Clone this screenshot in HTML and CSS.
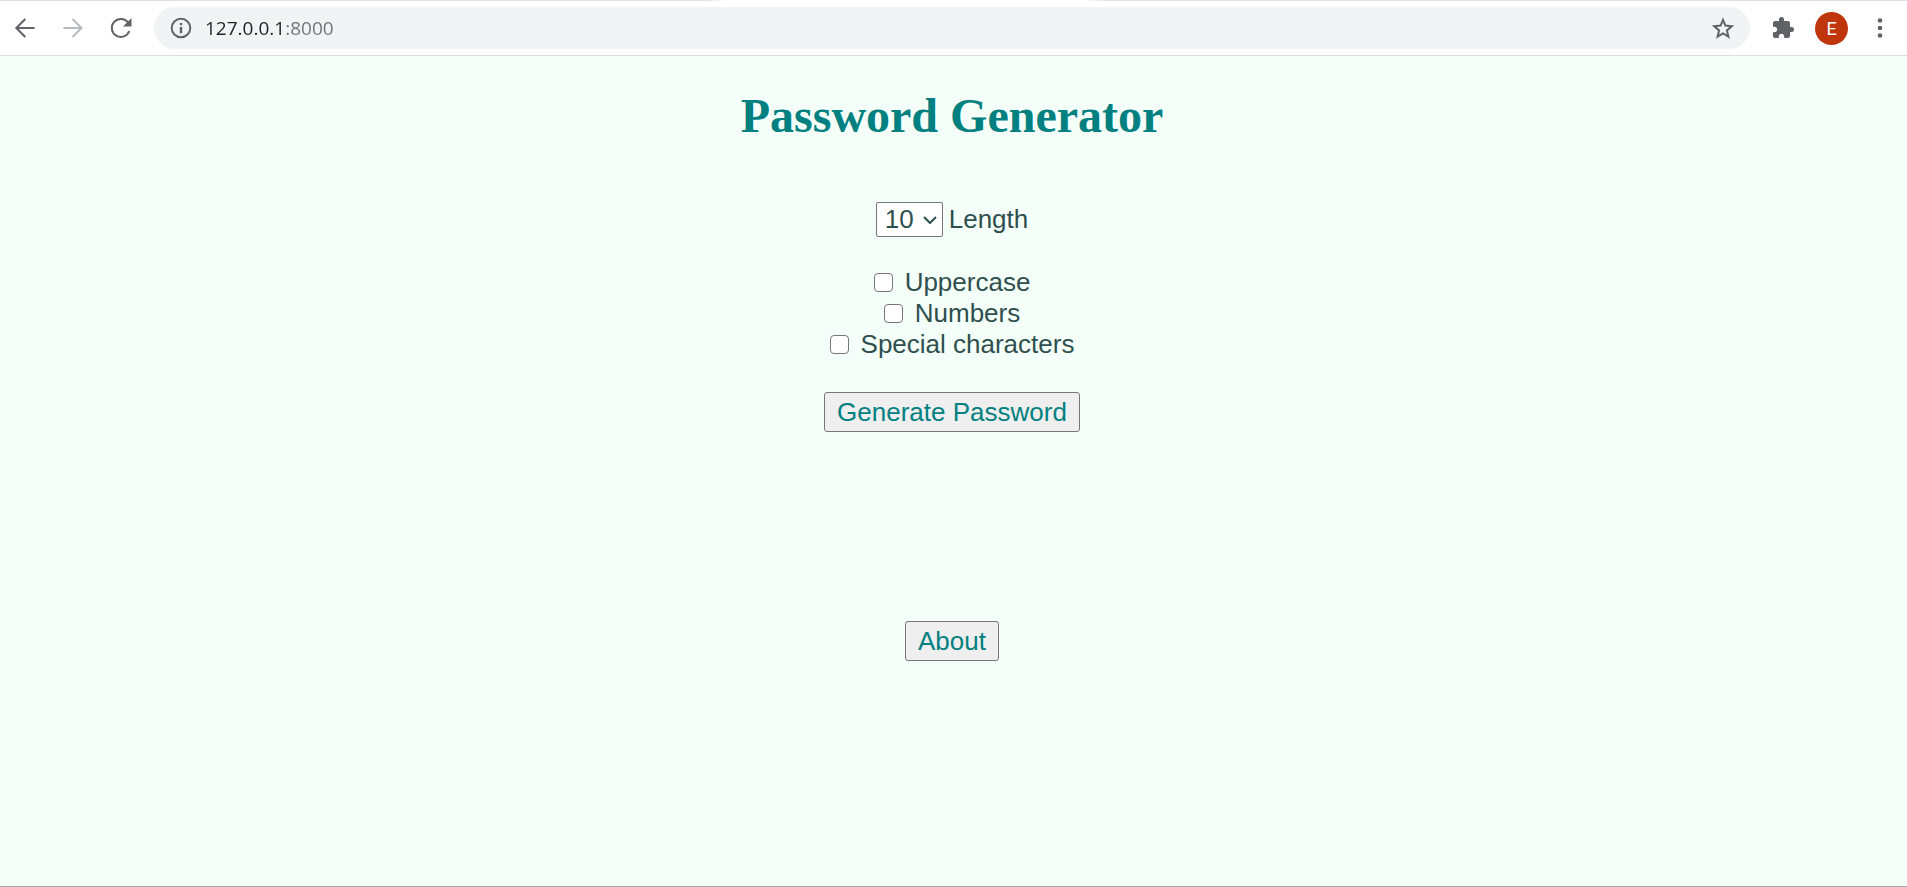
FILE: index.html
```html
<!DOCTYPE html>
<html lang="en">
<head>
<meta charset="utf-8">
<meta name="viewport" content="width=device-width, initial-scale=1">
<title>Password Generator</title>
<link rel="stylesheet" href="styles.css">
</head>
<body>
<header class="toolbar">
  <nav class="nav-buttons">
    <button class="icon-button" type="button" aria-label="Back"><svg class="icon" viewBox="0 0 24 24"><path class="line" d="M21.500 12H4M12.300 3L3.300 12l9 9"/></svg></button>
    <button class="icon-button faded" type="button" aria-label="Forward"><svg class="icon" viewBox="0 0 24 24"><path class="line" d="M2.500 12H20M11.500 3l9 9-9 9"/></svg></button>
    <button class="icon-button" type="button" aria-label="Reload"><svg class="icon" viewBox="0 0 24 24"><path class="line" d="M19 6.500A9 9 0 1 0 20.300 15"/><path class="solid" d="M22.500 2v8.500H14z"/></svg></button>
  </nav>
  <div class="address-bar">
    <svg class="icon" viewBox="0 0 24 24" aria-hidden="true"><circle class="line" cx="12" cy="12" r="9.300"/><path class="solid" d="M10.800 7h2.400v2.300h-2.400zM10.800 11h2.400v6.300h-2.400z"/></svg>
    <input class="address" type="text" value="127.0.0.1:8000" aria-label="Address">
    <button class="icon-button" type="button" aria-label="Bookmark"><svg class="icon" viewBox="0 0 24 24"><path class="line" d="M12 3.800l2.400 5.800 6.400.6-4.900 4.200 1.500 6.200-5.400-3.300-5.400 3.300 1.500-6.200-4.900-4.200 6.400-.6z"/></svg></button>
  </div>
  <div class="actions">
    <button class="icon-button" type="button" aria-label="Extensions"><svg class="icon" viewBox="0 0 24 24"><path class="solid" d="M20.500 11H19V7c0-1.100-.9-2-2-2h-4V3.500a2.500 2.500 0 0 0-5 0V5H4c-1.100 0-1.990.9-1.990 2v3.800H3.500c1.490 0 2.700 1.210 2.700 2.700s-1.210 2.700-2.700 2.700H2V20c0 1.100.9 2 2 2h3.800v-1.500c0-1.490 1.210-2.700 2.700-2.700s2.700 1.210 2.700 2.700V22H17c1.100 0 2-.9 2-2v-4h1.500a2.500 2.500 0 0 0 0-5z"/></svg></button>
    <button class="avatar" type="button">E</button>
    <button class="icon-button" type="button" aria-label="Menu"><svg class="icon" viewBox="0 0 24 24"><circle class="solid" cx="12" cy="4.500" r="2.300"/><circle class="solid" cx="12" cy="12" r="2.300"/><circle class="solid" cx="12" cy="19.500" r="2.300"/></svg></button>
  </div>
</header>
<main class="page">
  <h1 class="title">Password Generator</h1>
  <form class="generator">
    <div class="length-row">
      <div class="select-box">
        <select class="length" id="length"><option>10</option></select>
        <svg class="chevron" viewBox="0 0 14 8" aria-hidden="true"><path class="line" d="M1 1l6 6 6-6"/></svg>
      </div>
      <label for="length">Length</label>
    </div>
    <div class="options">
      <div class="option"><input class="check" type="checkbox" id="uppercase"><label for="uppercase">Uppercase</label></div>
      <div class="option"><input class="check" type="checkbox" id="numbers"><label for="numbers">Numbers</label></div>
      <div class="option"><input class="check" type="checkbox" id="special"><label for="special">Special characters</label></div>
    </div>
    <button class="button" type="button">Generate Password</button>
  </form>
  <button class="button" type="button">About</button>
</main>
</body>
</html>
```
FILE: styles.css
```css
* {
  box-sizing: border-box;
}

body {
  margin: 0;
  min-height: 100vh;
  display: flex;
  flex-direction: column;
  background: #f4fff9;
  color: #2f4f4f;
  font: 26px/31px "Liberation Sans", Arial, sans-serif;
  border-bottom: 1px solid #a5a9a8;
}

/* The top edge is open under the active tab. */
.toolbar {
  display: flex;
  align-items: center;
  padding: 7px 15px 6px 13px;
  background: linear-gradient(to right, #dee1e6 0 37%, #fff 38% 57%, #dee1e6 58%) top / 100% 1px no-repeat #fff;
  border-bottom: 1px solid #dadce0;
}

.nav-buttons {
  display: flex;
  gap: 24px;
  margin-right: 21px;
}

.icon-button {
  display: flex;
  padding: 0;
  border: 0;
  background: none;
}

.icon {
  width: 24px;
  height: 24px;
  flex: none;
  color: #5f6368;
}

.faded .icon {
  color: #b4babf;
}

.line {
  fill: none;
  stroke: currentColor;
  stroke-width: 2;
}

.solid {
  fill: currentColor;
}

.address-bar {
  flex: 1;
  display: flex;
  align-items: center;
  gap: 12px;
  height: 42px;
  padding: 0 15px;
  border-radius: 21px;
  background: #f1f3f4;
}

.address {
  flex: 1;
  min-width: 0;
  padding: 0;
  border: 0;
  background: linear-gradient(to right, #202124 79px, #6f7477 79px);
  -webkit-background-clip: text;
  background-clip: text;
  color: transparent;
  font: 19px/28px "Open Sans", sans-serif;
}

.actions {
  display: flex;
  align-items: center;
  gap: 20px;
  margin-left: 21px;
}

.avatar {
  width: 33px;
  height: 33px;
  padding: 0;
  border: 0;
  border-radius: 50%;
  background: #bf360c;
  color: #fff;
  font: 18px/33px Roboto, sans-serif;
}

.page {
  display: flex;
  flex-direction: column;
  align-items: center;
  padding-right: 3px;
}

.title {
  margin: 32px 0 59px;
  color: #008080;
  font: bold 48px/55px "Liberation Serif", "Times New Roman", serif;
}

.generator {
  display: flex;
  flex-direction: column;
  align-items: center;
  margin-bottom: 189px;
}

.length-row {
  display: flex;
  align-items: center;
  gap: 6px;
  margin-bottom: 30px;
}

.select-box {
  position: relative;
  display: flex;
}

.length {
  appearance: none;
  height: 35px;
  padding: 0 28px 0 8px;
  border: 1px solid #767676;
  border-radius: 2px;
  background: #fff;
  color: inherit;
  font: inherit;
}

.chevron {
  position: absolute;
  top: 14px;
  right: 6px;
  width: 14px;
  height: 8px;
  pointer-events: none;
}

.options {
  margin-bottom: 32px;
}

.option {
  display: flex;
  align-items: center;
  justify-content: center;
  gap: 12px;
}

.check {
  appearance: none;
  width: 19px;
  height: 19px;
  margin: 0;
  border: 1px solid #767676;
  border-radius: 4px;
  background: #fff;
}

.check:checked {
  background: #008080;
}

.button {
  height: 40px;
  padding: 0 12px;
  border: 1px solid #767676;
  border-radius: 3px;
  background: #efefef;
  color: #008080;
  font: inherit;
}
```
